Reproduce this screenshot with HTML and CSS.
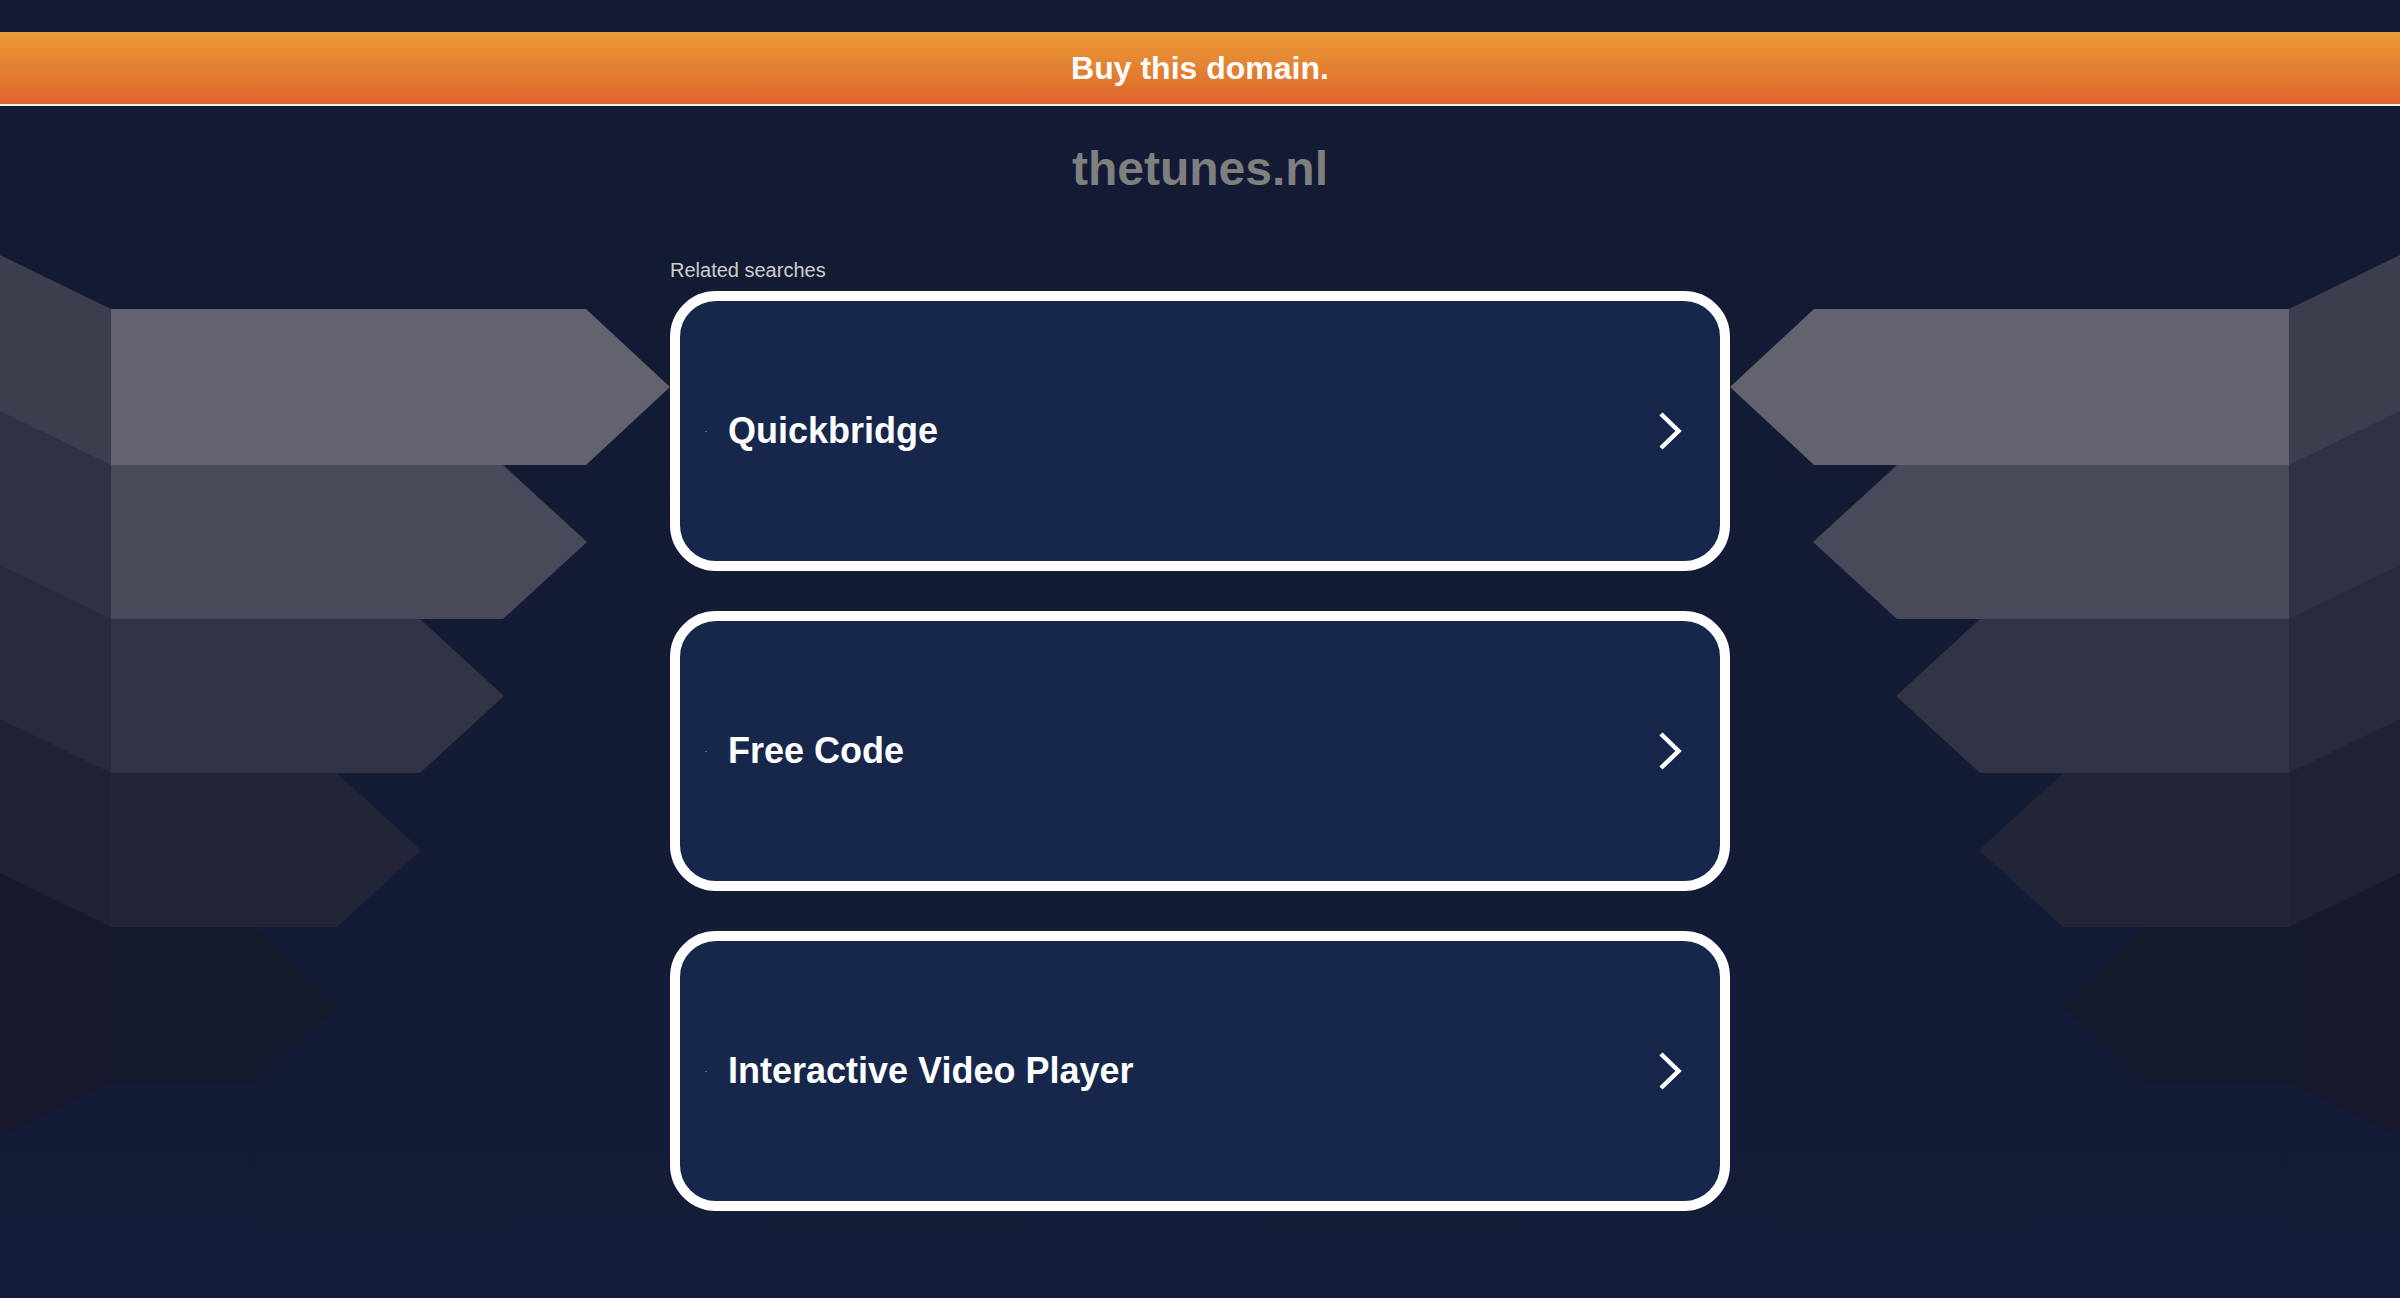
FILE: index.html
```html
<!DOCTYPE html>
<html lang="en">
<head>
<meta charset="utf-8">
<title>thetunes.nl</title>
<link rel="stylesheet" href="styles.css">
</head>
<body>
<div class="stage">
  <svg class="bg" viewBox="0 0 2400 1298" preserveAspectRatio="none" aria-hidden="true">
    <g class="side">
      <polygon class="t1" points="0,255 111,309 111,465 0,519"/>
      <polygon class="f1" points="111,309 586,309 670,387 586,465 111,465"/>
      <polygon class="t2" points="0,411 111,465 111,619 0,673"/>
      <polygon class="f2" points="111,465 503,465 587,542 503,619 111,619"/>
      <polygon class="t3" points="0,565 111,619 111,773 0,827"/>
      <polygon class="f3" points="111,619 420,619 504,696 420,773 111,773"/>
      <polygon class="t4" points="0,719 111,773 111,927 0,981"/>
      <polygon class="f4" points="111,773 337,773 421,850 337,927 111,927"/>
      <polygon class="t5" points="0,873 111,927 111,1082 0,1136"/>
      <polygon class="f5" points="111,927 254,927 338,1005 254,1082 111,1082"/>
    </g>
    <g class="side" transform="translate(2400,0) scale(-1,1)">
      <polygon class="t1" points="0,255 111,309 111,465 0,519"/>
      <polygon class="f1" points="111,309 586,309 670,387 586,465 111,465"/>
      <polygon class="t2" points="0,411 111,465 111,619 0,673"/>
      <polygon class="f2" points="111,465 503,465 587,542 503,619 111,619"/>
      <polygon class="t3" points="0,565 111,619 111,773 0,827"/>
      <polygon class="f3" points="111,619 420,619 504,696 420,773 111,773"/>
      <polygon class="t4" points="0,719 111,773 111,927 0,981"/>
      <polygon class="f4" points="111,773 337,773 421,850 337,927 111,927"/>
      <polygon class="t5" points="0,873 111,927 111,1082 0,1136"/>
      <polygon class="f5" points="111,927 254,927 338,1005 254,1082 111,1082"/>
    </g>
  </svg>

  <div class="page">
    <header class="topbar">
      <a class="buy" href="#">Buy this domain.</a>
    </header>

    <h1 class="domain">thetunes.nl</h1>

    <main class="results">
      <div class="label">Related searches</div>
      <ul class="cards">
        <li class="card">
          <span class="dot"></span>
          <span class="card-text">Quickbridge</span>
          <svg class="chev" viewBox="0 0 24 40" aria-hidden="true"><polyline points="3,3 20.5,20 3,37"/></svg>
        </li>
        <li class="card">
          <span class="dot"></span>
          <span class="card-text">Free Code</span>
          <svg class="chev" viewBox="0 0 24 40" aria-hidden="true"><polyline points="3,3 20.5,20 3,37"/></svg>
        </li>
        <li class="card">
          <span class="dot"></span>
          <span class="card-text">Interactive Video Player</span>
          <svg class="chev" viewBox="0 0 24 40" aria-hidden="true"><polyline points="3,3 20.5,20 3,37"/></svg>
        </li>
      </ul>
    </main>
  </div>
</div>
</body>
</html>
```

FILE: styles.css
```css
* {
  box-sizing: border-box;
}

html, body {
  margin: 0;
  padding: 0;
}

body {
  background: linear-gradient(180deg, #141a33 0%, #141b35 60%, #151c39 100%);
  font-family: "Liberation Sans", Arial, sans-serif;
  min-height: 1298px;
  overflow: hidden;
}

.stage {
  display: grid;
  width: 100%;
  min-height: 1298px;
}

.bg {
  grid-area: 1 / 1;
  width: 100%;
  height: 1298px;
  display: block;
}

.t1 { fill: #3c3e4d; }
.f1 { fill: #62636f; }
.t2 { fill: #303243; }
.f2 { fill: #484a5a; }
.t3 { fill: #282b3c; }
.f3 { fill: #313445; }
.t4 { fill: #1e2234; }
.f4 { fill: #212537; }
.t5 { fill: #161a2c; }
.f5 { fill: #161a2d; }

.page {
  grid-area: 1 / 1;
  position: relative;
  z-index: 1;
  padding-top: 32px;
  display: flex;
  flex-direction: column;
  align-items: center;
}

.topbar {
  width: 100%;
  height: 74px;
  background: linear-gradient(180deg, #e99b38 0%, #e47e31 55%, #e0632a 100%);
  border-bottom: 2px solid #f2f2f2;
  display: flex;
  justify-content: center;
}

.buy {
  color: #ffffff;
  font-weight: bold;
  font-size: 32px;
  line-height: 72px;
  text-decoration: none;
}

.domain {
  margin: 36px 0 0;
  height: 54px;
  font-size: 48px;
  line-height: 54px;
  font-weight: bold;
  color: #7f7f7f;
}

.results {
  width: 1060px;
  margin-top: 62px;
}

.label {
  font-size: 20px;
  line-height: 24px;
  height: 24px;
  color: #cfcfcf;
}

.cards {
  list-style: none;
  margin: 9px 0 0;
  padding: 0;
  display: flex;
  flex-direction: column;
  gap: 40px;
}

.card {
  height: 280px;
  border: 10px solid #ffffff;
  border-radius: 46px;
  background: #17264b;
  display: flex;
  align-items: center;
  padding: 0 38px 0 25px;
}

.dot {
  width: 2px;
  height: 1px;
  background: #5d6883;
  flex: none;
}

.card-text {
  flex: 1;
  margin-left: 21px;
  color: #ffffff;
  font-weight: bold;
  font-size: 36px;
  line-height: 42px;
}

.chev {
  width: 24px;
  height: 40px;
  flex: none;
}

.chev polyline {
  fill: none;
  stroke: #ffffff;
  stroke-width: 4.5;
  stroke-linejoin: miter;
  stroke-linecap: butt;
}
```
